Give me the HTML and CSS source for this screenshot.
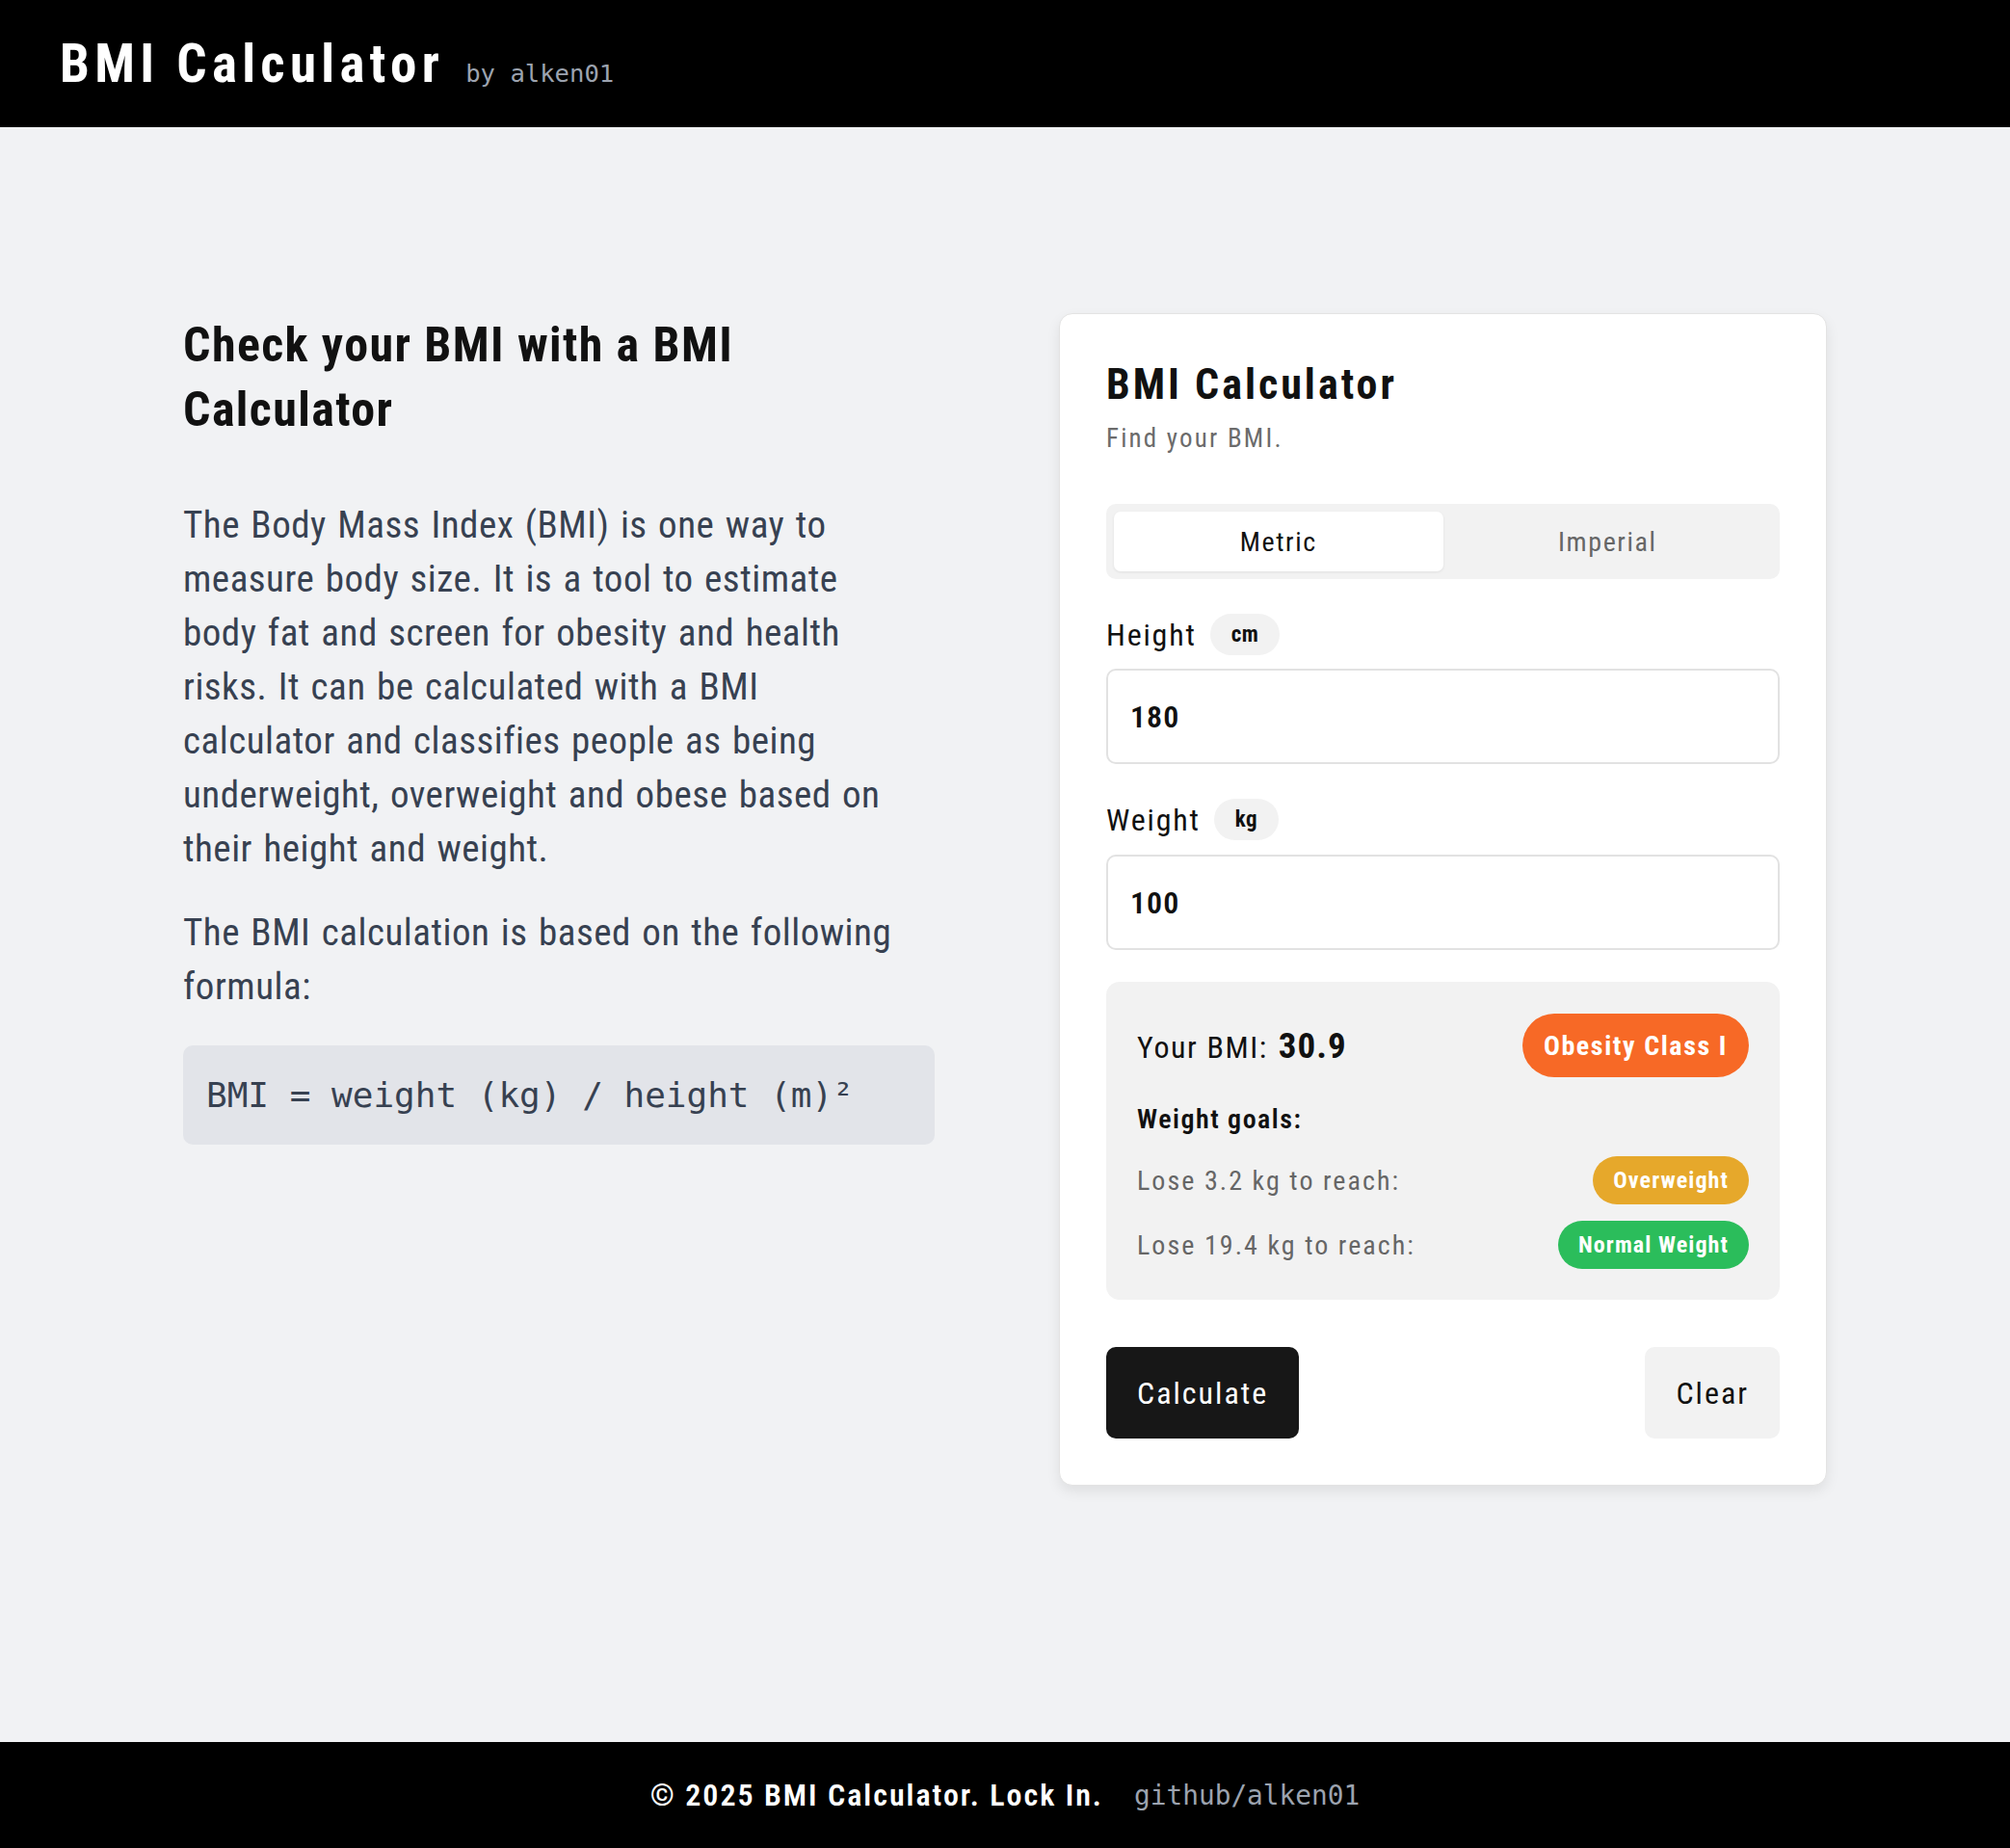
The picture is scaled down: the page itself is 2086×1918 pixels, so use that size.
FILE: index.html
```html
<!DOCTYPE html>
<html lang="en">
<head>
<meta charset="utf-8">
<title>BMI Calculator</title>
<link rel="stylesheet" href="styles.css">
</head>
<body>
<header class="site-header">
  <div class="brand">
    <h1 class="brand-title">BMI Calculator</h1>
    <span class="brand-by">by alken01</span>
  </div>
</header>

<main class="main">
  <section class="intro">
    <h2 class="intro-title">Check your BMI with a BMI Calculator</h2>
    <p class="intro-text">The Body Mass Index (BMI) is one way to measure body size. It is a tool to estimate body fat and screen for obesity and health risks. It can be calculated with a BMI calculator and classifies people as being underweight, overweight and obese based on their height and weight.</p>
    <p class="intro-text intro-text-second">The BMI calculation is based on the following formula:</p>
    <div class="formula">BMI = weight (kg) / height (m)²</div>
  </section>

  <section class="card">
    <h2 class="card-title">BMI Calculator</h2>
    <p class="card-subtitle">Find your BMI.</p>

    <div class="segmented">
      <button class="segment segment-active">Metric</button>
      <button class="segment">Imperial</button>
    </div>

    <div class="field-label">
      <span class="label-text">Height</span>
      <span class="unit">cm</span>
    </div>
    <div class="input">180</div>

    <div class="field-label field-label-second">
      <span class="label-text">Weight</span>
      <span class="unit">kg</span>
    </div>
    <div class="input input-second">100</div>

    <div class="result">
      <div class="result-row">
        <div class="result-bmi">Your BMI: <strong class="result-value">30.9</strong></div>
        <span class="pill pill-large pill-orange">Obesity Class I</span>
      </div>
      <div class="goals-title">Weight goals:</div>
      <div class="goal-row">
        <span class="goal-text">Lose 3.2 kg to reach:</span>
        <span class="pill pill-amber">Overweight</span>
      </div>
      <div class="goal-row goal-row-second">
        <span class="goal-text">Lose 19.4 kg to reach:</span>
        <span class="pill pill-green">Normal Weight</span>
      </div>
    </div>

    <div class="actions">
      <button class="btn btn-primary">Calculate</button>
      <button class="btn btn-secondary">Clear</button>
    </div>
  </section>
</main>

<footer class="site-footer">
  <span class="footer-text">© 2025 BMI Calculator. Lock In.</span>
  <span class="footer-link">github/alken01</span>
</footer>
</body>
</html>
```
FILE: styles.css
```css
* { box-sizing: border-box; }

html, body { margin: 0; padding: 0; }

body {
  min-height: 100vh;
  display: flex;
  flex-direction: column;
  background: #f1f2f4;
  color: #111111;
  font-family: "Roboto Condensed", "Roboto", "Liberation Sans", sans-serif;
  font-stretch: 75%;
}

button { font-family: inherit; font-stretch: inherit; border: 0; cursor: pointer; }

/* header */
.site-header {
  height: 132px;
  background: #000;
  display: flex;
  align-items: center;
  padding-left: 62px;
}
.brand { display: flex; align-items: baseline; gap: 22px; }
.brand-title {
  margin: 0;
  font-size: 55px;
  line-height: 55px;
  font-weight: 700;
  letter-spacing: 5.3px;
  color: #fff;
}
.brand-by {
  font-family: "DejaVu Sans Mono", monospace;
  font-size: 25.6px;
  color: #9ca3af;
}

/* main */
.main {
  flex: 1;
  display: flex;
  justify-content: center;
  align-items: flex-start;
  gap: 129px;
  padding-top: 193px;
}

.intro { width: 780px; }
.intro-title {
  margin: 0;
  max-width: 760px;
  font-size: 50px;
  line-height: 66.5px;
  font-weight: 700;
  letter-spacing: 1.4px;
  color: #111;
}
.intro-text {
  margin: 59px 0 0;
  max-width: 748px;
  font-size: 39px;
  line-height: 56px;
  letter-spacing: 0.5px;
  word-spacing: 2px;
  color: #374151;
}
.intro-text-second { margin-top: 31px; }
.formula {
  margin-top: 33px;
  height: 103px;
  display: flex;
  align-items: center;
  padding: 0 24px;
  background: #e2e4e9;
  border-radius: 10px;
  font-family: "DejaVu Sans Mono", monospace;
  font-size: 36px;
  color: #374151;
}

/* card */
.card {
  width: 797px;
  background: #fff;
  border: 1px solid #e3e3e3;
  border-radius: 14px;
  padding: 48px;
  box-shadow: 0 6px 14px rgba(0, 0, 0, 0.08);
}
.card-title {
  margin: 0;
  font-size: 44px;
  line-height: 50px;
  font-weight: 700;
  letter-spacing: 3px;
}
.card-subtitle {
  margin: 13px 0 0;
  font-size: 27px;
  line-height: 36px;
  letter-spacing: 2.2px;
  color: #6b6b6b;
}

.segmented {
  margin-top: 50px;
  height: 78px;
  padding: 8px;
  display: flex;
  background: #f2f2f2;
  border-radius: 10px;
}
.segment {
  flex: 1;
  background: transparent;
  border-radius: 7px;
  font-size: 28px;
  letter-spacing: 1.6px;
  color: #666;
}
.segment-active {
  background: #fff;
  color: #111;
  box-shadow: 0 1px 3px rgba(0, 0, 0, 0.08);
}

.field-label {
  margin-top: 36px;
  display: flex;
  align-items: center;
  gap: 14px;
  height: 43px;
}
.label-text { font-size: 32px; letter-spacing: 1.8px; color: #111; }
.unit {
  height: 43px;
  padding: 0 22px;
  display: flex;
  align-items: center;
  border-radius: 999px;
  background: #f2f2f2;
  font-size: 23px;
  font-weight: 700;
  letter-spacing: 0.5px;
}
.input {
  margin-top: 14px;
  height: 99px;
  display: flex;
  align-items: center;
  padding-left: 23px;
  border: 2px solid #e2e2e2;
  border-radius: 10px;
  font-size: 32px;
  font-weight: 600;
  letter-spacing: 1px;
}
.input-second { margin-top: 15px; }

.result {
  margin-top: 33px;
  padding: 33px 32px 32px 32px;
  background: #f2f2f2;
  border-radius: 14px;
}
.result-row {
  display: flex;
  justify-content: space-between;
  align-items: center;
}
.result-bmi { font-size: 32px; letter-spacing: 1.6px; }
.result-value { margin-left: 2px; font-size: 37px; font-weight: 700; letter-spacing: 1px; }
.pill {
  height: 50px;
  padding: 0 21px;
  display: inline-flex;
  align-items: center;
  border-radius: 999px;
  color: #fff;
  font-size: 24px;
  font-weight: 700;
  letter-spacing: 1.1px;
}
.pill-large { height: 66px; padding: 0 22px; font-size: 28px; letter-spacing: 1.6px; }
.pill-orange { background: #f76926; }
.pill-amber { background: #e6a82b; }
.pill-green { background: #2bbd5b; }

.goals-title {
  margin-top: 26px;
  font-size: 28px;
  line-height: 36px;
  font-weight: 600;
  letter-spacing: 1.5px;
}
.goal-row {
  margin-top: 20px;
  display: flex;
  justify-content: space-between;
  align-items: center;
}
.goal-row-second { margin-top: 17px; }
.goal-text { font-size: 28px; letter-spacing: 2.05px; color: #666; }

.actions {
  margin-top: 49px;
  display: flex;
  justify-content: space-between;
}
.btn {
  height: 95px;
  padding: 0 32px;
  border-radius: 10px;
  font-size: 32px;
  letter-spacing: 2px;
}
.btn-primary { background: #171717; color: #fff; }
.btn-secondary { background: #f2f2f2; color: #111; }

/* footer */
.site-footer {
  height: 110px;
  background: #000;
  display: flex;
  justify-content: center;
  align-items: center;
  gap: 32px;
}
.footer-text { color: #fff; font-size: 32px; font-weight: 600; letter-spacing: 2px; }
.footer-link {
  font-family: "DejaVu Sans Mono", monospace;
  font-size: 27.8px;
  color: #9ca3af;
}
```
